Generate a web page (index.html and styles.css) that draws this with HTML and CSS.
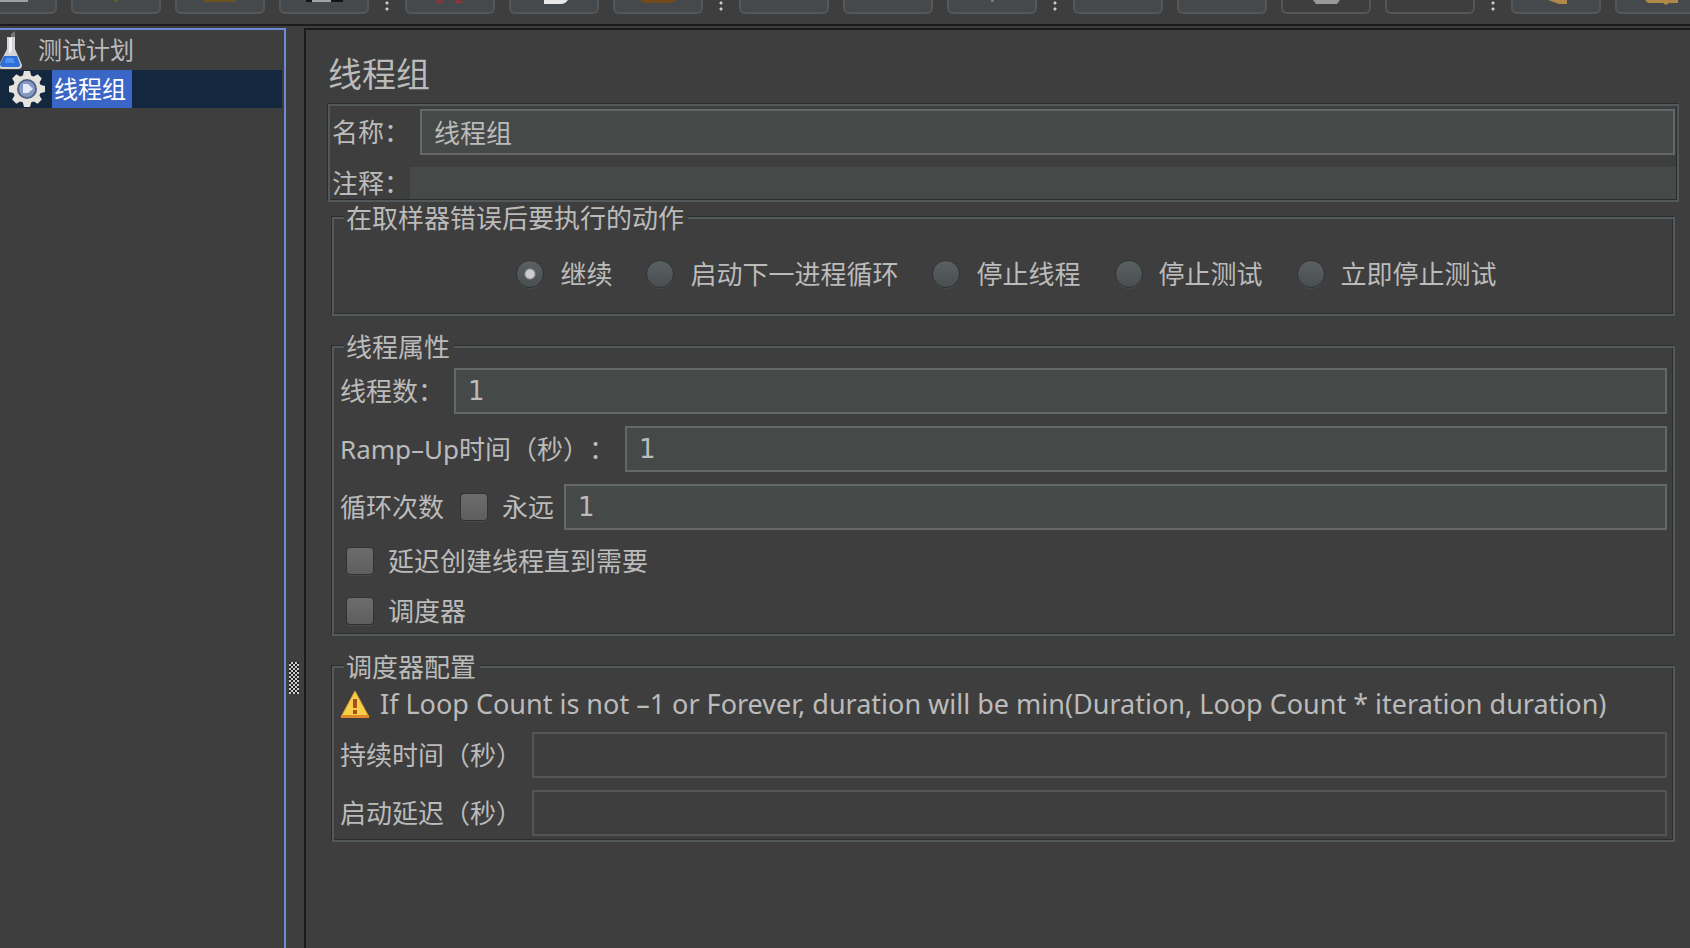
FILE: index.html
```
<!DOCTYPE html>
<html lang="zh-CN">
<head>
<meta charset="UTF-8">
<meta name="viewport" content="width=device-width, initial-scale=1.0">
<title>线程组</title>
<link rel="stylesheet" href="styles.css">
</head>
<body>
<header class="toolbar">
  <button class="tool" aria-label="新建"><svg viewBox="0 0 40 12"><rect width="36" height="2" fill="#a0a0a0"/></svg></button>
  <button class="tool" aria-label="模板"><svg viewBox="0 0 40 12"><path d="M17 0h5l-2 3z" fill="#55682a"/></svg></button>
  <button class="tool" aria-label="打开"><svg viewBox="0 0 40 12"><rect x="4" width="32" height="2" fill="#6b531f"/></svg></button>
  <button class="tool" aria-label="保存"><svg viewBox="0 0 40 12"><rect x="2" width="37" height="2" fill="#151515"/><rect x="8" width="19" height="2" fill="#a0a3a4"/></svg></button>
  <span class="sep"></span>
  <button class="tool" aria-label="剪切"><svg viewBox="0 0 40 12"><path d="M5 2q4-4 9 0v1H5zM24 2q5-4 9 0v1h-9z" fill="#8d3437"/></svg></button>
  <button class="tool" aria-label="复制"><svg viewBox="0 0 40 12"><path d="M10 0h24q-3 4-7 4H10z" fill="#e8e8e8"/></svg></button>
  <button class="tool" aria-label="粘贴"><svg viewBox="0 0 40 12"><path d="M2 0h36q-2 3-7 3H9Q4 3 2 0z" fill="#724b1c"/></svg></button>
  <span class="sep"></span>
  <button class="tool" aria-label="展开"></button>
  <button class="tool" aria-label="折叠"></button>
  <button class="tool" aria-label="切换"><svg viewBox="0 0 40 12"><path d="M19 0h3v2h-3z" fill="#74797a"/></svg></button>
  <span class="sep"></span>
  <button class="tool" aria-label="启动"></button>
  <button class="tool" aria-label="不停顿启动"></button>
  <button class="tool" aria-label="停止" disabled><svg viewBox="0 0 40 12"><path d="M7 0h27l-3 4H10z" fill="#999"/></svg></button>
  <button class="tool" aria-label="关闭" disabled></button>
  <span class="sep"></span>
  <button class="tool" aria-label="清除"><svg viewBox="0 0 40 12"><path d="M12 0h19v4h-8z" fill="#b0884a"/></svg></button>
  <button class="tool" aria-label="清除全部"><svg viewBox="0 0 40 12"><path d="M5 0h33v3h-9l-3 2-3-2H8z" fill="#b0884a"/></svg></button>
</header>

<main>
  <nav class="tree">
    <a class="node plan" href="#plan">
      <svg width="24" height="38" viewBox="0 0 24 38">
        <path d="M7 6h8v12l7 16q0 4-4 4H2q-4 0-3-4L7 18z" fill="#d4d4d8"/>
        <path d="M9 7h3v12l-3 4z" fill="#f4f4f6"/>
        <path d="M4 25h13l3 8q1 3-3 3H3q-3 0-3-3z" fill="#2f6fd8"/>
        <path d="M6 27h7l2 5H5z" fill="#4f92f0"/>
        <path d="M11 3l4-3v6h-4z" fill="#777"/>
      </svg>
      <span>测试计划</span>
    </a>
    <a class="node group selected" href="#group">
      <svg width="38" height="38" viewBox="0 0 38 38">
        <g fill="#e6e3df">
          <circle cx="19" cy="19" r="14"/>
          <path id="tooth" d="M16 1h6l2 8H14zM16 37h6l2-8H14z"/>
          <use href="#tooth" transform="rotate(45 19 19)"/>
          <use href="#tooth" transform="rotate(90 19 19)"/>
          <use href="#tooth" transform="rotate(135 19 19)"/>
        </g>
        <circle cx="19" cy="19" r="10" fill="#4f6488"/>
        <circle cx="19" cy="19" r="8" fill="#8799c0"/>
        <path d="M15 14h5l5 5-5 4h-5z" fill="#e4eaf6"/>
      </svg>
      <span>线程组</span>
    </a>
  </nav>
  <div class="splitter"><span class="grip"></span></div>

  <form class="editor">
    <h1>线程组</h1>
    <div class="naming">
      <div class="row">
        <label for="name">名称：</label>
        <input class="field" type="text" id="name" value="线程组">
      </div>
      <div class="row comment">
        <label for="comment">注释：</label>
        <input class="field flat" type="text" id="comment">
      </div>
    </div>

    <fieldset class="actions">
      <legend>在取样器错误后要执行的动作</legend>
      <div class="radios">
        <label><input type="radio" name="action" checked>继续</label>
        <label><input type="radio" name="action">启动下一进程循环</label>
        <label><input type="radio" name="action">停止线程</label>
        <label><input type="radio" name="action">停止测试</label>
        <label><input type="radio" name="action">立即停止测试</label>
      </div>
    </fieldset>

    <fieldset class="props">
      <legend>线程属性</legend>
      <div class="row">
        <label for="threads">线程数：</label>
        <input class="field number" type="text" id="threads" value="1">
      </div>
      <div class="row">
        <label for="ramp">Ramp–Up时间（秒）：</label>
        <input class="field number" type="text" id="ramp" value="1">
      </div>
      <div class="row loops">
        <label for="loops">循环次数</label>
        <label class="check"><input type="checkbox">永远</label>
        <input class="field number" type="text" id="loops" value="1">
      </div>
      <label class="check line"><input type="checkbox">延迟创建线程直到需要</label>
      <label class="check line"><input type="checkbox">调度器</label>
    </fieldset>

    <fieldset class="scheduler">
      <legend>调度器配置</legend>
      <p class="warning">
        <svg width="30" height="30" viewBox="0 0 30 30">
          <path d="M15 2l14 26H1z" fill="#f8cf48" stroke="#d99a34" stroke-width="1"/>
          <path d="M1 26h28v3H1z" fill="#e08a2a"/>
          <path d="M13 10h4v9h-4zM13 21h4v4h-4z" fill="#a8501c"/>
        </svg>
        If Loop Count is not –1 or Forever, duration will be min(Duration, Loop Count * iteration duration)
      </p>
      <div class="row">
        <label for="duration">持续时间（秒）</label>
        <input class="field" type="text" id="duration" disabled>
      </div>
      <div class="row">
        <label for="delay">启动延迟（秒）</label>
        <input class="field" type="text" id="delay" disabled>
      </div>
    </fieldset>
  </form>
</main>
</body>
</html>
```
FILE: styles.css
```
* {
  box-sizing: border-box;
}

body {
  margin: 0;
  height: 100vh;
  display: flex;
  flex-direction: column;
  overflow: hidden;
  background: #3e3e3e;
  color: #bbb;
  font-family: "Noto Sans", "Noto Sans CJK SC", sans-serif;
  font-size: 26px;
  line-height: 36px;
  text-spacing-trim: space-all;
}

/* toolbar, scrolled mostly out of view */
.toolbar {
  display: flex;
  flex-shrink: 0;
  gap: 14px;
  height: 26px;
  margin-left: -33px;
  border-bottom: 2px solid #1b1b1b;
  overflow: hidden;
}

.tool {
  flex: 0 0 90px;
  height: 14px;
  padding: 0;
  border: 2px solid #54585a;
  border-top: 0;
  border-radius: 0 0 6px 6px;
  background: #45494b;
}

.tool:disabled {
  background: #3e3e3e;
}

.tool svg {
  display: block;
  width: 40px;
  height: 12px;
  margin: 0 auto;
}

.sep {
  flex: 0 0 8px;
  height: 12px;
  background: radial-gradient(circle, #ccc 1px, transparent 2px) 0 0 / 8px 6px;
}

main {
  flex: 1;
  display: flex;
  min-height: 0;
  padding-top: 2px;
}

.tree {
  flex: 0 0 286px;
  border: solid #6a89d8;
  border-width: 2px 2px 0 0;
  padding-right: 2px;
}

.node {
  display: flex;
  align-items: center;
  height: 38px;
  color: #bbb;
  font-size: 24px;
  text-decoration: none;
}

.plan {
  gap: 14px;
  height: 40px;
}

.group {
  gap: 6px;
  padding-left: 8px;
}

.selected {
  background: #13283e;
}

.selected span {
  padding: 1px 6px 1px 2px;
  background: #3a66c8;
  color: #fff;
}

.splitter {
  flex: 0 0 18px;
  display: flex;
  align-items: center;
  justify-content: center;
  padding: 380px 2px 0 0;
}

.grip {
  width: 10px;
  height: 32px;
  background: conic-gradient(#ccc 25%, #222 0 50%, #ccc 0 75%, #222 0) 0 0 / 4px 4px;
}

.editor {
  flex: 1;
  min-width: 0;
  border: solid #1b1b1b;
  border-width: 2px 0 0 2px;
  padding: 20px 11px 0 22px;
}

h1 {
  margin: 0 0 6px;
  font-size: 34px;
  font-weight: 400;
  line-height: 48px;
}

/* etched borders */
.naming,
fieldset {
  border: 2px solid #53585b;
  box-shadow: -1px -1px 0 #2a2e30, inset -1px -1px 0 #2a2e30;
}

.naming {
  padding: 3px 1px 1px 2px;
}

.row {
  display: flex;
  align-items: center;
  gap: 10px;
  margin-bottom: 12px;
}

.field {
  flex: 1;
  min-width: 0;
  height: 46px;
  padding: 0 12px;
  border: 2px solid #646866;
  border-radius: 0;
  background: #454948;
  color: #bbb;
  font: inherit;
}

.field:disabled {
  border-color: #555;
  background: #3e3e3e;
}

.number {
  font-family: "DejaVu Sans", sans-serif;
}

.flat {
  height: 32px;
  border: 0;
}

.naming .row {
  padding-right: 1px;
}

.naming .comment {
  gap: 0;
  margin-bottom: 0;
  padding-right: 0;
  line-height: 32px;
}

fieldset {
  min-width: 0;
  margin: 0 4px 15px;
  padding: 0 6px 2px;
}

legend {
  margin-left: 4px;
  padding: 0 4px 0 2px;
  background: #3e3e3e;
  line-height: 32px;
}

.radios {
  display: flex;
  justify-content: center;
  gap: 34px;
  padding: 22px 0 20px 6px;
}

.radios label,
.check {
  display: flex;
  align-items: center;
  gap: 16px;
}

.check {
  gap: 14px;
}

input[type="radio"],
input[type="checkbox"] {
  appearance: none;
  width: 28px;
  height: 28px;
  margin: 0;
  border: 1px solid #303234;
  border-radius: 4px;
  background: linear-gradient(#6c6c6c, #5e5e5e);
  box-shadow: 0 1px 1px #4a4a4a;
}

input[type="radio"] {
  border-radius: 50%;
  background: linear-gradient(#5b6063, #494e50);
}

input[type="radio"]:checked {
  background: radial-gradient(circle, #ccc 4px, transparent 6px), linear-gradient(#5b6063, #494e50);
}

.props {
  padding-top: 5px;
}

.loops {
  margin-bottom: 10px;
}

.loops .check {
  padding-left: 6px;
}

.line {
  height: 42px;
  padding-left: 6px;
}

.line + .line {
  margin-top: 8px;
}

.scheduler {
  padding: 3px 6px 4px;
}

.scheduler .row:last-child {
  margin-bottom: 0;
}

.warning {
  display: flex;
  align-items: center;
  gap: 10px;
  margin: 0 0 10px;
  font-size: 27px;
}
```
